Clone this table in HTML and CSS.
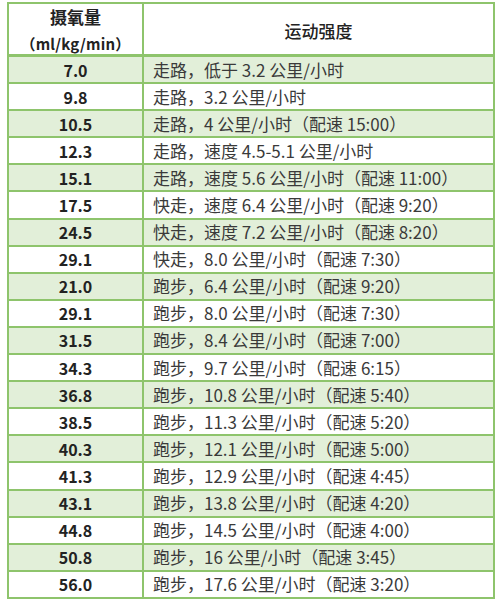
FILE: index.html
```html
<!DOCTYPE html>
<html lang="zh-CN">
<head>
<meta charset="utf-8">
<title>摄氧量与运动强度</title>
<link rel="stylesheet" href="styles.css">
</head>
<body>
<div class="sheet">
  <div class="row head">
    <div class="c1"><span class="hz">摄氧量</span><span class="unit">（ml/kg/min）</span></div>
    <div class="c2 center"><span class="hz2">运动强度</span></div>
  </div>
  <div class="row g"><div class="c1">7.0</div><div class="c2">走路，低于 3.2 公里/小时</div></div>
  <div class="row"><div class="c1">9.8</div><div class="c2">走路，3.2 公里/小时</div></div>
  <div class="row g"><div class="c1">10.5</div><div class="c2">走路，4 公里/小时（配速 15:00）</div></div>
  <div class="row"><div class="c1">12.3</div><div class="c2">走路，速度 4.5-5.1 公里/小时</div></div>
  <div class="row g"><div class="c1">15.1</div><div class="c2">走路，速度 5.6 公里/小时（配速 11:00）</div></div>
  <div class="row"><div class="c1">17.5</div><div class="c2">快走，速度 6.4 公里/小时（配速 9:20）</div></div>
  <div class="row g"><div class="c1">24.5</div><div class="c2">快走，速度 7.2 公里/小时（配速 8:20）</div></div>
  <div class="row"><div class="c1">29.1</div><div class="c2">快走，8.0 公里/小时（配速 7:30）</div></div>
  <div class="row g"><div class="c1">21.0</div><div class="c2">跑步，6.4 公里/小时（配速 9:20）</div></div>
  <div class="row"><div class="c1">29.1</div><div class="c2">跑步，8.0 公里/小时（配速 7:30）</div></div>
  <div class="row g"><div class="c1">31.5</div><div class="c2">跑步，8.4 公里/小时（配速 7:00）</div></div>
  <div class="row"><div class="c1">34.3</div><div class="c2">跑步，9.7 公里/小时（配速 6:15）</div></div>
  <div class="row g"><div class="c1">36.8</div><div class="c2">跑步，10.8 公里/小时（配速 5:40）</div></div>
  <div class="row"><div class="c1">38.5</div><div class="c2">跑步，11.3 公里/小时（配速 5:20）</div></div>
  <div class="row g"><div class="c1">40.3</div><div class="c2">跑步，12.1 公里/小时（配速 5:00）</div></div>
  <div class="row"><div class="c1">41.3</div><div class="c2">跑步，12.9 公里/小时（配速 4:45）</div></div>
  <div class="row g"><div class="c1">43.1</div><div class="c2">跑步，13.8 公里/小时（配速 4:20）</div></div>
  <div class="row"><div class="c1">44.8</div><div class="c2">跑步，14.5 公里/小时（配速 4:00）</div></div>
  <div class="row g"><div class="c1">50.8</div><div class="c2">跑步，16 公里/小时（配速 3:45）</div></div>
  <div class="row"><div class="c1">56.0</div><div class="c2">跑步，17.6 公里/小时（配速 3:20）</div></div>
</div>
</body>
</html>
```
FILE: styles.css
```css
html, body {
  margin: 0;
  padding: 0;
  background: #fff;
}
body {
  padding: 2px 0 0 7px;
  font-family: "Noto Sans CJK SC", "Noto Sans", sans-serif;
  color: #333;
}
.sheet {
  width: 484px;
  border: 2px solid #8ec46c;
  display: flex;
  flex-direction: column;
}
.row {
  display: grid;
  grid-template-columns: 135px 1fr;
  height: 25.1px;
  border-top: 2px solid #8ec46c;
}
.row.head {
  height: 50px;
  border-top: 0;
  border-bottom: 1px solid #8ec46c;
}
.row.g {
  background: #e2efd9;
}
.c1 {
  border-right: 2px solid #8ec46c;
  display: flex;
  align-items: center;
  justify-content: center;
  font-weight: 700;
  font-size: 16px;
  line-height: 20px;
  color: #222;
}
.c2 {
  display: flex;
  align-items: center;
  padding-left: 9px;
  font-size: 17px;
  line-height: 20px;
  color: #3a3a3a;
  white-space: nowrap;
}
.c2.center {
  justify-content: center;
  padding-left: 0;
}
.head .c1 {
  flex-direction: column;
  gap: 0;
}
.hz {
  font-size: 17px;
  line-height: 26px;
}
.unit {
  font-size: 15px;
  line-height: 28px;
  letter-spacing: 0.2px;
}
.hz2 {
  font-size: 17px;
  font-weight: 500;
  color: #222;
}
```
